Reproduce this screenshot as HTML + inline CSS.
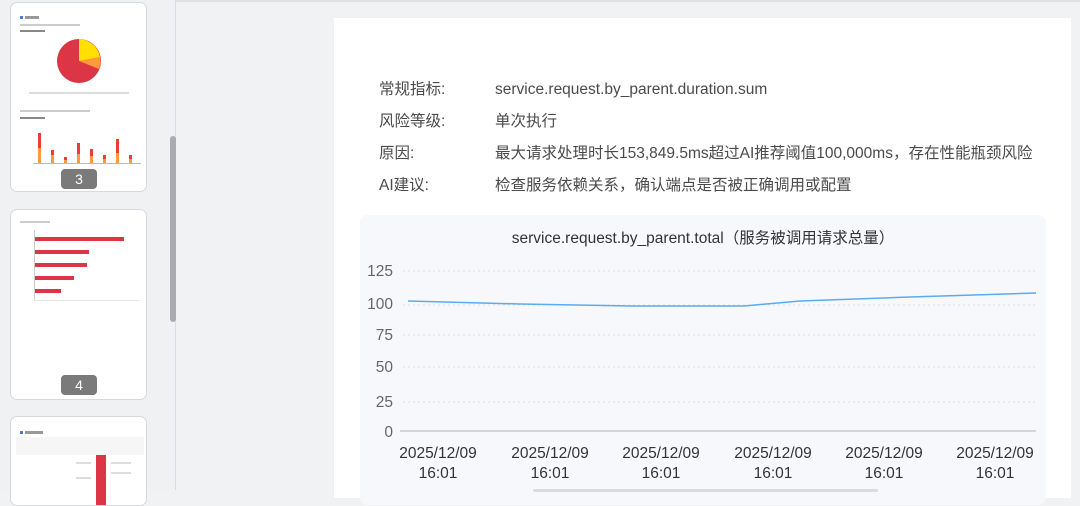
<!DOCTYPE html>
<html><head><meta charset="utf-8"><style>
*{margin:0;padding:0;box-sizing:border-box}
body{width:1080px;height:490px;overflow:hidden;background:#f1f2f4;font-family:"Liberation Sans","Noto Sans CJK SC",sans-serif;position:relative}
.side{position:absolute;left:0;top:0;width:176px;height:490px;background:#f0f1f3;border-right:1px solid #dcdde0}
.thumb{position:absolute;left:10px;width:137px;background:#fff;border:1px solid #d8d9dc;border-radius:7px;overflow:hidden}
.num{position:absolute;left:50px;width:36px;height:20px;background:#7a7a7a;color:#fff;border-radius:4px;text-align:center;font-size:14px;line-height:20px}
.sb{position:absolute;left:170px;top:136px;width:6px;height:186px;background:#a9abae;border-radius:3px}
.top{position:absolute;left:0;top:0;width:1080px;height:2px;background:#e0e1e3}
.card{position:absolute;left:334px;top:18px;width:737px;height:480px;background:#fff}
.row{position:absolute;font-size:15.5px;color:#4a4a4a;white-space:nowrap;line-height:18px}
.chart{position:absolute;left:360px;top:215px;width:686px;height:290px;background:#f7f8fc;border-radius:8px}
</style></head><body>
<div class="top"></div>
<div class="side">
 <div class="thumb" style="top:2px;height:190px">
  <svg width="137" height="190" style="position:absolute;left:0;top:0">
   <rect x="9" y="13" width="3" height="3" fill="#4a7bd0"/><rect x="14" y="13" width="14" height="3" fill="#999"/>
   <rect x="9" y="21" width="60" height="2" fill="#ccc"/><rect x="9" y="27" width="25" height="2" fill="#888"/>
   <circle cx="68" cy="58" r="22" fill="#dc3545"/>
   <path d="M68 58 L68 36 A22 22 0 0 1 89 54 Z" fill="#ffe000"/>
   <path d="M68 58 L89 54 A22 22 0 0 1 88 66 Z" fill="#ff9a3c"/>
   <rect x="18" y="89" width="100" height="2" fill="#ddd"/>
   <rect x="9" y="107" width="70" height="2" fill="#ccc"/><rect x="9" y="114" width="25" height="2" fill="#888"/>
   <g fill="#ff9a3c"><rect x="27" y="145" width="3" height="15"/><rect x="40" y="152" width="3" height="8"/><rect x="53" y="157" width="3" height="3"/><rect x="66" y="151" width="3" height="9"/><rect x="79" y="153" width="3" height="7"/><rect x="92" y="156" width="3" height="4"/><rect x="105" y="150" width="3" height="10"/><rect x="118" y="156" width="3" height="4"/></g>
   <g fill="#f03a3a"><rect x="27" y="130" width="3" height="15"/><rect x="40" y="147" width="3" height="5"/><rect x="53" y="154" width="3" height="3"/><rect x="66" y="140" width="3" height="11"/><rect x="79" y="146" width="3" height="7"/><rect x="92" y="152" width="3" height="4"/><rect x="105" y="136" width="3" height="14"/><rect x="118" y="152" width="3" height="4"/></g>
   <rect x="22" y="160" width="108" height="1" fill="#bbb"/>
  </svg>
  <div class="num" style="top:166px">3</div>
 </div>
 <div class="thumb" style="top:209px;height:191px">
  <svg width="137" height="191" style="position:absolute;left:0;top:0">
   <rect x="9" y="11" width="30" height="2" fill="#ccc"/>
   <g fill="#dc3545"><rect x="23" y="27" width="90" height="4"/><rect x="23" y="40" width="55" height="4"/><rect x="23" y="53" width="53" height="4"/><rect x="23" y="66" width="40" height="4"/><rect x="23" y="79" width="27" height="4"/></g>
   <rect x="23" y="20" width="1" height="70" fill="#ccc"/><rect x="23" y="90" width="105" height="1" fill="#e3e3e3"/>
  </svg>
  <div class="num" style="top:165px">4</div>
 </div>
 <div class="thumb" style="top:416px;height:90px">
  <svg width="137" height="90" style="position:absolute;left:0;top:0">
   <rect x="9" y="14" width="3" height="3" fill="#4a7bd0"/><rect x="14" y="14" width="18" height="3" fill="#999"/>
   <rect x="5" y="20" width="128" height="18" fill="#f6f6f6"/>
   <rect x="85" y="38" width="10" height="60" fill="#dc3545"/>
   <g fill="#ddd"><rect x="100" y="45" width="20" height="2"/><rect x="100" y="55" width="20" height="2"/><rect x="65" y="45" width="15" height="2"/><rect x="65" y="60" width="15" height="2"/></g>
  </svg>
 </div>
 <div class="sb"></div>
</div>
<div class="card">
 <div class="row" style="left:45px;top:63px">常规指标:</div><div class="row" style="left:161px;top:63px">service.request.by_parent.duration.sum</div>
 <div class="row" style="left:45px;top:95px">风险等级:</div><div class="row" style="left:161px;top:95px">单次执行</div>
 <div class="row" style="left:45px;top:127px">原因:</div><div class="row" style="left:161px;top:127px">最大请求处理时长153,849.5ms超过AI推荐阈值100,000ms，存在性能瓶颈风险</div>
 <div class="row" style="left:45px;top:159px">AI建议:</div><div class="row" style="left:161px;top:159px">检查服务依赖关系，确认端点是否被正确调用或配置</div>
</div>
<div class="chart">
 <svg width="686" height="290" style="position:absolute;left:0;top:0" font-family="Liberation Sans, Noto Sans CJK SC, sans-serif">
  <text x="343" y="28" text-anchor="middle" font-size="15.5" fill="#333">service.request.by_parent.total（服务被调用请求总量）</text>
  <g stroke="#dcdde3" stroke-dasharray="2 3">
   <line x1="43" y1="56" x2="676" y2="56"/><line x1="43" y1="90" x2="676" y2="90"/><line x1="43" y1="120" x2="676" y2="120"/><line x1="43" y1="152" x2="676" y2="152"/><line x1="43" y1="187" x2="676" y2="187"/>
  </g>
  <line x1="40" y1="216" x2="676" y2="216" stroke="#c8c9cc" stroke-width="1.5"/>
  <g font-size="15.5" fill="#666" text-anchor="end">
   <text x="33" y="61">125</text><text x="33" y="94">100</text><text x="33" y="125">75</text><text x="33" y="157">50</text><text x="33" y="192">25</text><text x="33" y="222">0</text>
  </g>
  <polyline points="48,86 160,89 272,91 384,91 440,86 550,82 676,78" fill="none" stroke="#5aabf0" stroke-width="1.5"/>
  <g font-size="15.5" fill="#333" text-anchor="middle">
   <text x="78" y="243">2025/12/09</text><text x="78" y="263">16:01</text>
   <text x="190" y="243">2025/12/09</text><text x="190" y="263">16:01</text>
   <text x="301" y="243">2025/12/09</text><text x="301" y="263">16:01</text>
   <text x="413" y="243">2025/12/09</text><text x="413" y="263">16:01</text>
   <text x="524" y="243">2025/12/09</text><text x="524" y="263">16:01</text>
   <text x="635" y="243">2025/12/09</text><text x="635" y="263">16:01</text>
  </g>
  <rect x="173" y="274" width="345" height="3" rx="1.5" fill="#dadbe0"/>
 </svg>
</div>
</body></html>
